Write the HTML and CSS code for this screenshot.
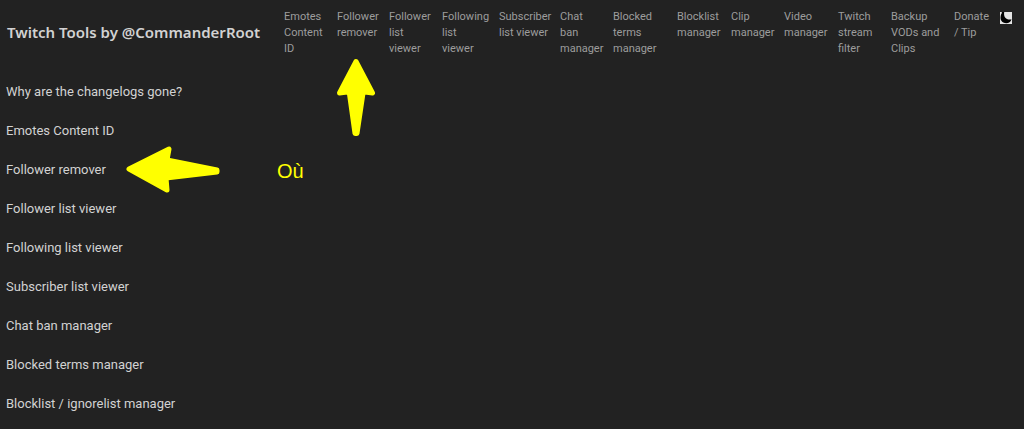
FILE: index.html
```html
<!DOCTYPE html>
<html lang="en">
<head>
<meta charset="utf-8">
<meta name="viewport" content="width=device-width, initial-scale=1">
<title>Twitch Tools by @CommanderRoot</title>
<link rel="stylesheet" href="styles.css">
</head>
<body>
<header class="navbar">
  <a class="brand" href="#">Twitch Tools by @CommanderRoot</a>
  <nav class="nav">
    <a href="#">Emotes Content ID</a>
    <a href="#">Follower remover</a>
    <a href="#">Follower list viewer</a>
    <a href="#">Following list viewer</a>
    <a href="#">Subscriber list viewer</a>
    <a href="#">Chat ban manager</a>
    <a href="#">Blocked terms manager</a>
    <a href="#">Blocklist manager</a>
    <a href="#">Clip manager</a>
    <a href="#">Video manager</a>
    <a href="#">Twitch stream filter</a>
    <a href="#">Backup VODs and Clips</a>
    <a href="#">Donate / Tip</a>
    <button class="theme" type="button" aria-label="Toggle dark mode">
      <svg class="moon" viewBox="0 0 12 12" aria-hidden="true"><rect width="12" height="12" fill="#e4e4e4"/><path d="M1.500 0H4.200C3.600 3.800 5 6.900 8.200 7.400C9.400 7.600 10.500 7.500 11.500 7.200C10.800 9.700 8.800 11.200 6.200 11.200C3 11.200 0.500 9 0.500 5.800C0.500 3.600 1.200 1.800 2 0.800Z" fill="#000"/></svg>
    </button>
  </nav>
</header>
<main class="tools">
  <a href="#">Why are the changelogs gone?</a>
  <a href="#">Emotes Content ID</a>
  <a href="#">Follower remover</a>
  <a href="#">Follower list viewer</a>
  <a href="#">Following list viewer</a>
  <a href="#">Subscriber list viewer</a>
  <a href="#">Chat ban manager</a>
  <a href="#">Blocked terms manager</a>
  <a href="#">Blocklist / ignorelist manager</a>
</main>
<svg class="arrow arrow-up" viewBox="0 0 40 78" aria-hidden="true"><path d="M20 3.500L36.500 35L27.200 33.800L21 75.500H19L13.200 33.800L3.500 35Z"/></svg>
<svg class="arrow arrow-left" viewBox="0 0 94 47" aria-hidden="true"><path d="M3 23L43 3L41 14L91 24V26L40 32L41 44Z"/></svg>
<span class="note">Où</span>
</body>
</html>
```
FILE: styles.css
```css
* {
  box-sizing: border-box;
}

body {
  position: relative;
  margin: 0;
  min-height: 100vh;
  background: #222;
  color: #d2d2d2;
  font-family: Roboto, "Noto Sans", sans-serif;
  font-size: 13px;
}

a {
  color: inherit;
  text-decoration: none;
}

.navbar {
  display: flex;
  align-items: flex-start;
  padding: 9px 8px 16px 7px;
}

.brand {
  flex: 0 0 277px;
  padding-top: 11px;
  font-family: "Noto Sans", "Open Sans", sans-serif;
  font-size: 15px;
  font-weight: 600;
  line-height: 24px;
  white-space: nowrap;
}

.nav {
  flex: 1;
  display: grid;
  grid-template-columns: 53fr 52fr 53fr 57fr 61fr 53fr 64fr 54fr 53fr 54fr 53fr 63fr 46fr 16fr;
  color: #9d9d9d;
  font-size: 11px;
  line-height: 16px;
}

.nav a {
  min-width: 0;
  padding-right: 11px;
}

.theme {
  width: 12px;
  height: 12px;
  margin: 3px 0 0;
  padding: 0;
  border: 0;
  background: none;
}

.moon {
  display: block;
  width: 12px;
  height: 12px;
}

.tools {
  display: flex;
  flex-direction: column;
  align-items: flex-start;
  gap: 19px;
  padding: 9px 6px 16px;
  line-height: 20px;
}

.arrow {
  position: absolute;
  overflow: visible;
  fill: #ff0;
  stroke: #ff0;
  stroke-width: 5px;
  stroke-linejoin: round;
}

.arrow-up {
  top: 58px;
  left: 336px;
  width: 40px;
  height: 78px;
}

.arrow-left {
  top: 146px;
  left: 126px;
  width: 94px;
  height: 47px;
}

.note {
  position: absolute;
  top: 159px;
  left: 277px;
  color: #ff0;
  font-family: "Liberation Sans", Arial, sans-serif;
  font-size: 20px;
  line-height: 24px;
}
```
